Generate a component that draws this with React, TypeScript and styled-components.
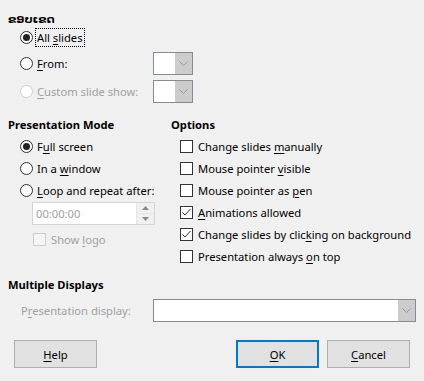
import React from "react";
import styled, { createGlobalStyle, css } from "styled-components";

const GlobalStyle = createGlobalStyle`
  html, body {
    margin: 0;
    padding: 0;
    background: #f0f0f0;
  }
  body {
    font-family: "Noto Sans", "DejaVu Sans", sans-serif;
    font-size: 11.2px;
    color: #000;
  }
`;

const Dialog = styled.div`
  width: 424px;
  height: 381px;
  padding: 11px 14px 0 8px;
  box-sizing: border-box;
  display: flex;
  flex-direction: column;
`;

const Heading = styled.div<{ $top?: number }>`
  font-weight: bold;
  line-height: 16px;
  height: 16px;
  white-space: nowrap;
  margin-top: ${(p) => p.$top ?? 0}px;
`;

const RangeGrid = styled.div`
  display: grid;
  grid-template-columns: 133px 40px;
  grid-template-rows: 20px 23px 23px;
  row-gap: 5px;
  margin: 0 0 0 12px;
  align-items: center;
`;

const Columns = styled.div`
  display: grid;
  grid-template-columns: 163px 1fr;
  margin-top: 14px;
`;

const Column = styled.div`
  display: flex;
  flex-direction: column;
`;

const List = styled.div<{ $indent: number }>`
  display: flex;
  flex-direction: column;
  margin: 2px 0 0 ${(p) => p.$indent}px;
`;

const Row = styled.label<{ $disabled?: boolean; $gap?: number }>`
  display: flex;
  align-items: center;
  gap: ${(p) => p.$gap ?? 4}px;
  height: 22px;
  white-space: nowrap;
  color: ${(p) => (p.$disabled ? "#a0a0a0" : "#000")};
`;

const RadioDot = styled.span<{ $checked?: boolean; $disabled?: boolean }>`
  width: 13px;
  height: 13px;
  box-sizing: border-box;
  border-radius: 50%;
  border: 1px solid ${(p) => (p.$disabled ? "#cccccc" : "#333")};
  background: #fff;
  flex: none;
  position: relative;
  ${(p) =>
    p.$checked &&
    css`
      &::after {
        content: "";
        position: absolute;
        left: 2px;
        top: 2px;
        width: 7px;
        height: 7px;
        border-radius: 50%;
        background: #222;
      }
    `}
`;

const Box = styled.span<{ $disabled?: boolean }>`
  width: 13px;
  height: 13px;
  box-sizing: border-box;
  border: 1px solid ${(p) => (p.$disabled ? "#cccccc" : "#333")};
  background: ${(p) => (p.$disabled ? "#f5f5f5" : "#fff")};
  flex: none;
  display: flex;
  svg {
    display: block;
  }
`;

const Focus = styled.span`
  outline: 1px dotted #000;
  outline-offset: 1px;
  line-height: 15px;
`;

const Mn = styled.span`
  text-decoration: underline;
  text-underline-offset: 2px;
`;

const Combo = styled.div<{ $width?: number }>`
  width: ${(p) => (p.$width ? `${p.$width}px` : "40px")};
  height: 23px;
  box-sizing: border-box;
  border: 1px solid #868a94;
  background: #fff;
  display: flex;
  justify-content: flex-end;
`;

const ComboButton = styled.div`
  width: 17px;
  background: #cccccc;
  display: flex;
  align-items: center;
  justify-content: center;
`;

const Spin = styled.div`
  width: 123px;
  height: 23px;
  box-sizing: border-box;
  border: 1px solid #d4d4d4;
  background: #fff;
  display: flex;
  margin: 1px 0 1px 24px;
`;

const SpinText = styled.div`
  flex: 1;
  color: #a0a0a0;
  padding-left: 3px;
  line-height: 21px;
`;

const SpinButtons = styled.div`
  width: 17px;
  display: flex;
  flex-direction: column;
  border-left: 1px solid #e6e6e6;
  > div {
    flex: 1;
    display: flex;
    align-items: center;
    justify-content: center;
    background: #f0f0f0;
  }
  > div + div {
    border-top: 1px solid #e6e6e6;
  }
`;

const DisplayRow = styled.div`
  display: grid;
  grid-template-columns: 132px 1fr;
  align-items: center;
  margin: 6px 0 0 13px;
  color: #a0a0a0;
`;

const Buttons = styled.div`
  display: flex;
  margin: 18px 0 0 6px;
  gap: 8px;
`;

const Button = styled.div<{ $default?: boolean; $push?: boolean }>`
  width: 83px;
  height: 28px;
  box-sizing: border-box;
  background: #e1e1e1;
  border: ${(p) => (p.$default ? "2px solid #0078d7" : "1px solid #adadad")};
  display: flex;
  align-items: center;
  justify-content: center;
  margin-left: ${(p) => (p.$push ? "auto" : "0")};
`;

const Chevron = ({ color = "#999" }: { color?: string }) => (
  <svg width="9" height="5" viewBox="0 0 9 5">
    <polyline points="0.5,0.5 4.5,4.5 8.5,0.5" fill="none" stroke={color} strokeWidth="1" />
  </svg>
);

const Check = () => (
  <svg width="11" height="11" viewBox="0 0 11 11">
    <polyline points="1.5,5.5 4,8 9.5,2" fill="none" stroke="#333" strokeWidth="1" />
  </svg>
);

const Triangle = ({ up }: { up?: boolean }) => (
  <svg width="7" height="4" viewBox="0 0 7 4">
    <polygon points={up ? "0,4 3.5,0 7,4" : "0,0 3.5,4 7,0"} fill="#8a8a8a" />
  </svg>
);

function Radio({
  checked,
  disabled,
  children,
}: {
  checked?: boolean;
  disabled?: boolean;
  children: React.ReactNode;
}) {
  return (
    <Row $disabled={disabled}>
      <RadioDot $checked={checked} $disabled={disabled} />
      <span>{children}</span>
    </Row>
  );
}

function CheckBox({
  checked,
  disabled,
  children,
}: {
  checked?: boolean;
  disabled?: boolean;
  children: React.ReactNode;
}) {
  return (
    <Row $disabled={disabled} $gap={5}>
      <Box $disabled={disabled}>{checked && <Check />}</Box>
      <span>{children}</span>
    </Row>
  );
}

function SmallCombo() {
  return (
    <Combo>
      <ComboButton>
        <Chevron />
      </ComboButton>
    </Combo>
  );
}

export default function App() {
  return (
    <>
      <GlobalStyle />
      <Dialog>
        <Heading>ຂອບເຂດ</Heading>
        <RangeGrid>
          <Radio checked>
            <Focus>
              All <Mn>s</Mn>lides
            </Focus>
          </Radio>
          <span />
          <Radio>
            <Mn>F</Mn>rom:
          </Radio>
          <SmallCombo />
          <Radio disabled>
            <Mn>C</Mn>ustom slide show:
          </Radio>
          <SmallCombo />
        </RangeGrid>

        <Columns>
          <Column>
            <Heading>Presentation Mode</Heading>
            <List $indent={12}>
              <Radio checked>
                F<Mn>u</Mn>ll screen
              </Radio>
              <Radio>
                In a <Mn>w</Mn>indow
              </Radio>
              <Radio>
                <Mn>L</Mn>oop and repeat after:
              </Radio>
            </List>
            <Spin>
              <SpinText>00:00:00</SpinText>
              <SpinButtons>
                <div>
                  <Triangle up />
                </div>
                <div>
                  <Triangle />
                </div>
              </SpinButtons>
            </Spin>
            <List $indent={25}>
              <CheckBox disabled>
                Show <Mn>l</Mn>ogo
              </CheckBox>
            </List>
          </Column>
          <Column>
            <Heading>Options</Heading>
            <List $indent={9}>
              <CheckBox>
                Change slides <Mn>m</Mn>anually
              </CheckBox>
              <CheckBox>
                Mouse pointer <Mn>v</Mn>isible
              </CheckBox>
              <CheckBox>
                Mouse pointer as <Mn>p</Mn>en
              </CheckBox>
              <CheckBox checked>
                <Mn>A</Mn>nimations allowed
              </CheckBox>
              <CheckBox checked>
                Change slides by clic<Mn>k</Mn>ing on background
              </CheckBox>
              <CheckBox>
                Presentation always <Mn>o</Mn>n top
              </CheckBox>
            </List>
          </Column>
        </Columns>

        <Heading $top={10}>Multiple Displays</Heading>
        <DisplayRow>
          <span>
            P<Mn>r</Mn>esentation display:
          </span>
          <Combo $width={263}>
            <ComboButton>
              <Chevron />
            </ComboButton>
          </Combo>
        </DisplayRow>

        <Buttons>
          <Button>
            <span>
              <Mn>H</Mn>elp
            </span>
          </Button>
          <Button $default $push>
            <span>
              <Mn>O</Mn>K
            </span>
          </Button>
          <Button>
            <span>
              <Mn>C</Mn>ancel
            </span>
          </Button>
        </Buttons>
      </Dialog>
    </>
  );
}
